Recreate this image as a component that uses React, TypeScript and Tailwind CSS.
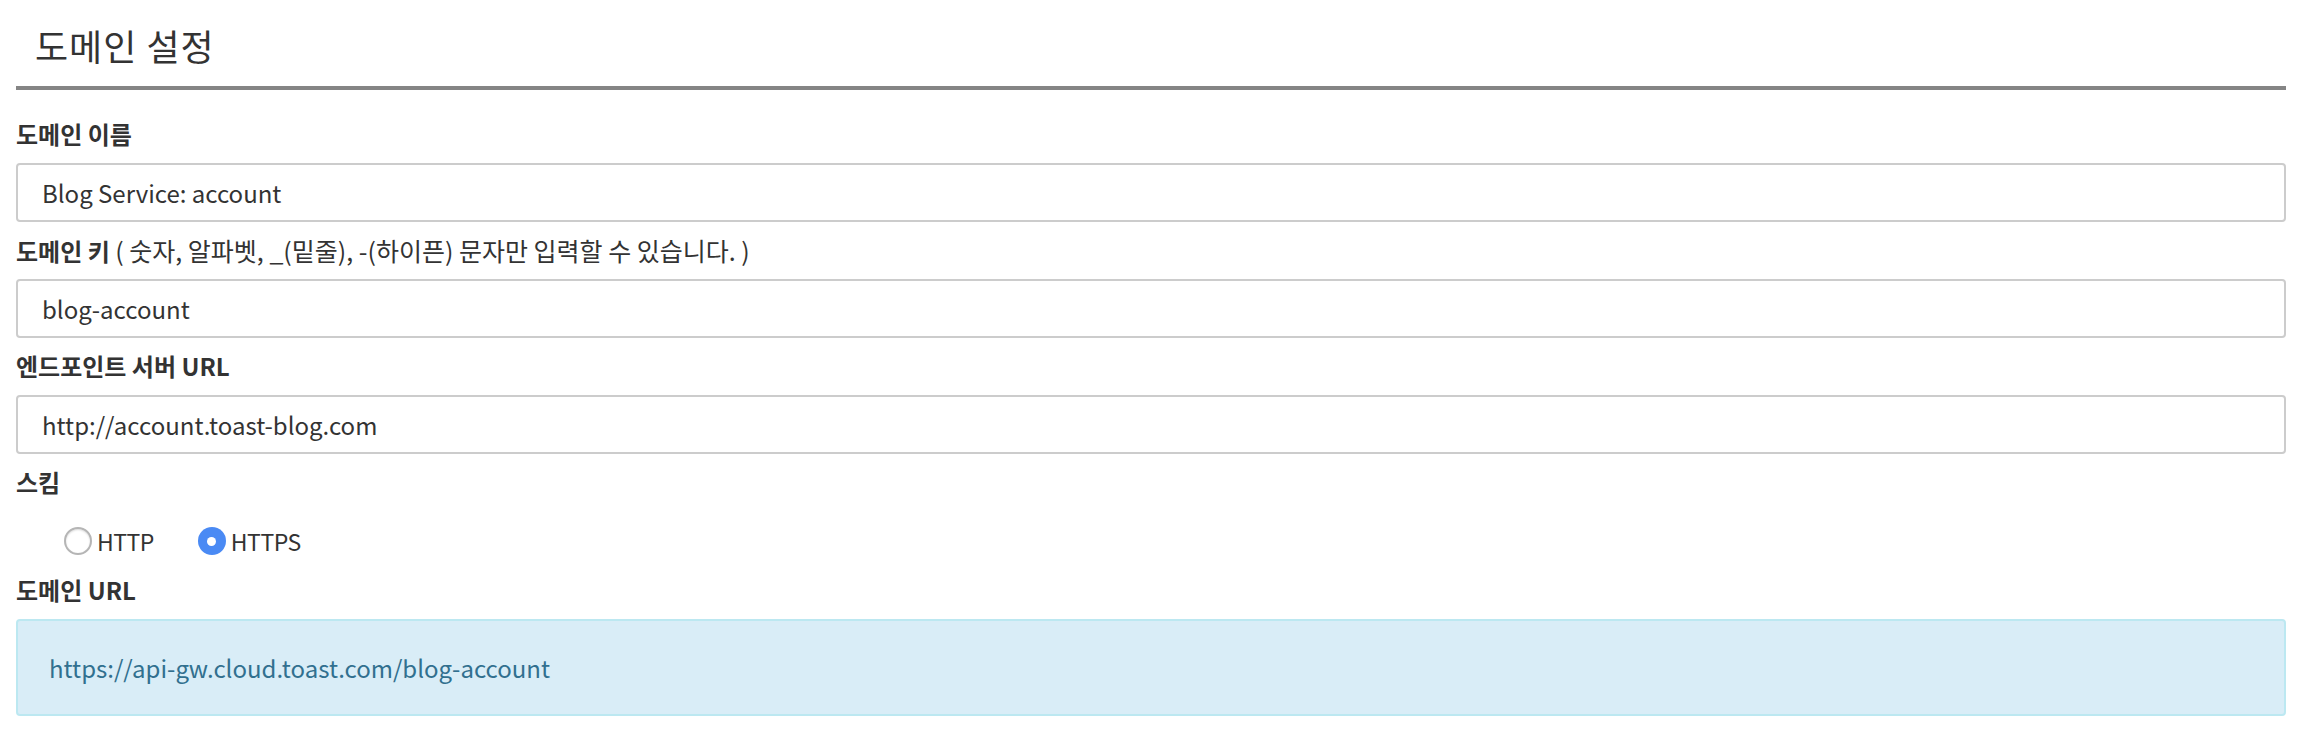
import { useState } from 'react';

const font = { fontFamily: '"Noto Sans CJK KR", "Noto Sans", sans-serif' };

const Label = ({ children }: { children: React.ReactNode }) => (
  <div className="mb-[11px] h-[36px] text-[24px] leading-[36px] font-bold text-[#333]">
    {children}
  </div>
);

const Field = ({ value }: { value: string }) => (
  <div className="flex h-[59px] items-center rounded-[4px] border-2 border-[#cccccc] bg-white px-6 text-[24px] text-[#333]">
    {value}
  </div>
);

const Radio = ({ checked, label, onClick }: { checked: boolean; label: string; onClick: () => void }) => (
  <button type="button" onClick={onClick} className="flex items-center gap-[5px]">
    {checked ? (
      <span className="flex h-[28px] w-[28px] items-center justify-center rounded-full bg-[#4a8af4]">
        <span className="h-[9px] w-[9px] rounded-full bg-white" />
      </span>
    ) : (
      <span className="h-[28px] w-[28px] rounded-full border-2 border-[#b5b5b5] bg-white shadow-[inset_0_1px_2px_rgba(0,0,0,0.15)]" />
    )}
    <span className="text-[23px] tracking-[-0.5px] text-[#333]">{label}</span>
  </button>
);

export default function App() {
  const [scheme, setScheme] = useState('HTTPS');

  return (
    <div className="min-h-[734px] w-full bg-white pl-4 pr-6" style={font}>
      <div className="flex h-[90px] items-center border-b-4 border-[#858585] pl-[19px] pt-[4px]">
        <h1 className="text-[36px] font-normal tracking-[1px] text-[#333]">도메인 설정</h1>
      </div>

      <div className="pt-[26px]">
        <Label>도메인 이름</Label>
        <Field value="Blog Service: account" />

        <div className="mt-[10px]">
          <Label>
            도메인 키{' '}
            <span className="text-[25px] font-normal">
              ( 숫자, 알파벳, _(밑줄), -(하이픈) 문자만 입력할 수 있습니다. )
            </span>
          </Label>
          <Field value="blog-account" />
        </div>

        <div className="mt-[10px]">
          <Label>엔드포인트 서버 URL</Label>
          <Field value="http://account.toast-blog.com" />
        </div>

        <div className="mt-[10px]">
          <div className="h-[36px] text-[24px] leading-[36px] font-bold text-[#333]">스킴</div>
          <div className="mt-[10px] flex h-[62px] items-center gap-[44px] pl-[48px]">
            <Radio checked={scheme === 'HTTP'} label="HTTP" onClick={() => setScheme('HTTP')} />
            <Radio checked={scheme === 'HTTPS'} label="HTTPS" onClick={() => setScheme('HTTPS')} />
          </div>
        </div>

        <div>
          <Label>도메인 URL</Label>
          <div className="flex h-[97px] items-center rounded-[4px] border-2 border-[#bce8f1] bg-[#d9edf7] px-[31px] text-[24px] text-[#31708f]">
            https://api-gw.cloud.toast.com/blog-account
          </div>
        </div>
      </div>
    </div>
  );
}
